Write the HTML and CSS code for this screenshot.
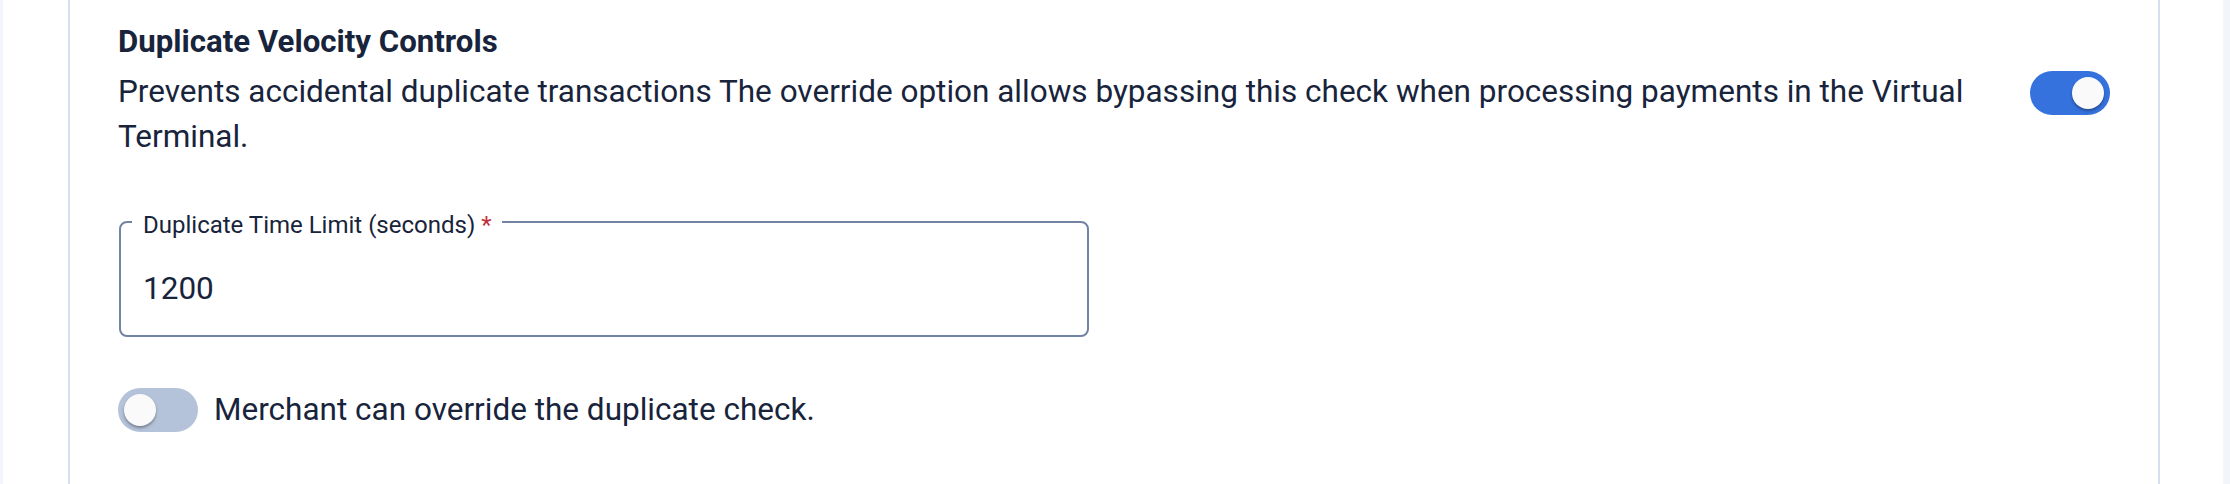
FILE: index.html
```html
<!DOCTYPE html>
<html lang="en">
<head>
<meta charset="utf-8">
<title>Duplicate Velocity Controls</title>
<link rel="stylesheet" href="styles.css">
</head>
<body>
<div class="panel">
  <section class="card">
    <div class="header-row">
      <div class="header-text">
        <h2 class="title">Duplicate Velocity Controls</h2>
        <p class="desc">Prevents accidental duplicate transactions The override option allows bypassing this check when processing payments in the Virtual Terminal.</p>
      </div>
      <span class="toggle toggle-on header-toggle" role="switch" aria-checked="true"><span class="knob"></span></span>
    </div>

    <fieldset class="field">
      <legend class="field-label">Duplicate Time Limit (seconds) <span class="req">*</span></legend>
      <input class="field-input" type="text" value="1200">
    </fieldset>

    <div class="switch-row">
      <span class="toggle toggle-off" role="switch" aria-checked="false"><span class="knob"></span></span>
      <span class="switch-label">Merchant can override the duplicate check.</span>
    </div>
  </section>
</div>
</body>
</html>
```

FILE: styles.css
```css
html, body {
  margin: 0;
  padding: 0;
}

body {
  background: #f2f6fb;
  font-family: Roboto, "Liberation Sans", Arial, sans-serif;
  color: #18243b;
  height: 484px;
  overflow: hidden;
}

.panel {
  margin-left: 3px;
  width: 2220px;
  height: 484px;
  background: #ffffff;
  padding: 0 63px 0 65px;
  box-sizing: border-box;
}

.card {
  height: 100%;
  border-left: 2px solid #d6e0ef;
  border-right: 2px solid #d6e0ef;
  padding: 19px 48px 0 48px;
  box-sizing: border-box;
}

.header-row {
  display: flex;
  align-items: flex-start;
  gap: 40px;
}

.header-text {
  flex: 1;
  min-width: 0;
}

.title {
  margin: 0;
  font-size: 31.2px;
  line-height: 45px;
  font-weight: 700;
}

.desc {
  margin: 5px 0 0;
  font-size: 31.5px;
  line-height: 45px;
  font-weight: 400;
}

.toggle {
  flex: none;
  position: relative;
  display: inline-block;
  width: 80px;
  height: 44px;
  border-radius: 22px;
  box-sizing: border-box;
}

.header-toggle {
  margin-top: 52px;
}

.toggle-on {
  background: #3572de;
}

.toggle-off {
  background: #b5c3da;
}

.knob {
  position: absolute;
  top: 6px;
  width: 32px;
  height: 32px;
  border-radius: 50%;
  background: #fafafa;
  box-shadow: 0 2px 3px rgba(0, 0, 0, 0.35);
}

.toggle-on .knob {
  right: 6px;
}

.toggle-off .knob {
  left: 6px;
}

.field {
  margin: 44px 0 0 1px;
  width: 970px;
  box-sizing: border-box;
  min-width: 0;
  border: 2px solid #7284a3;
  border-radius: 8px;
  padding: 26px 22px 24px 22px;
}

.field-label {
  margin-left: -11px;
  padding: 7px 10px 0 11px;
  font-size: 24px;
  line-height: 30px;
  color: #18243b;
}

.req {
  color: #c0303a;
}

.field-input {
  display: block;
  width: 100%;
  height: 45px;
  border: none;
  outline: none;
  padding: 0;
  margin: 0;
  font-family: inherit;
  font-size: 31.5px;
  color: #18243b;
  background: transparent;
}

.switch-row {
  display: flex;
  align-items: center;
  gap: 16px;
  margin-top: 50px;
}

.switch-label {
  font-size: 31.5px;
  line-height: 45px;
}
```
